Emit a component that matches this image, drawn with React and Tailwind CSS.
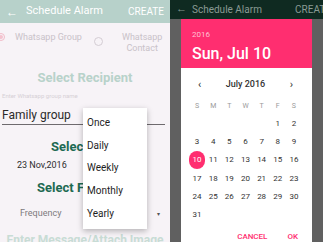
import React from "react";

const weeks = [
  ["", "", "", "", "", "1", "2"],
  ["3", "4", "5", "6", "7", "8", "9"],
  ["10", "11", "12", "13", "14", "15", "16"],
  ["17", "18", "19", "20", "21", "22", "23"],
  ["24", "25", "26", "27", "28", "29", "30"],
  ["31", "", "", "", "", "", ""],
];

const LeftScreen = () => {
  return (
    <div className="relative w-[170px] h-[242px] bg-[#f7f3f7] overflow-hidden">
      <div className="h-[23px] bg-[#b7d1ca] flex items-center px-[6px] text-white text-[11px]">
        <span className="w-[16px] text-[12px]">←</span>
        <span className="flex-1 ml-[4px]">Schedule Alarm</span>
        <span className="text-[10px]">CREATE</span>
      </div>

      <div className="flex items-start pt-[9px] text-[#c9c2c9] text-[9px] leading-[11px]">
        <div className="w-[8px] h-[8px] rounded-full border border-[#f2bcc9] flex items-center justify-center -ml-[3px] mt-[1px]">
          <div className="w-[4px] h-[4px] rounded-full bg-[#f4c3cf]" />
        </div>
        <span className="ml-[10px]">Whatsapp Group</span>
        <div className="w-[9px] h-[9px] rounded-full border border-[#d4cdd4] ml-[12px] mt-[5px]" />
        <span className="ml-[19px] text-center">
          Whatsapp
          <br />
          Contact
        </span>
      </div>

      <div className="text-center text-[#b8d2ca] font-bold text-[13px] mt-[14px]">
        Select Recipient
      </div>

      <div className="px-[2px] mt-[3px] text-[#d6d0d6] text-[6px]">Enter Whatsapp group name</div>
      <div className="mx-[2px] mr-[5px] border-b border-[#6e6a6e] text-[#2a2a2a] text-[12px] leading-[16px] pt-[7px] pb-[1px]">
        Family group
      </div>

      <div className="pl-[51px] mt-[12px] text-[#1d6a52] font-bold text-[13px]">Select</div>
      <div className="pl-[17px] mt-[3px] text-[#2d2d2d] text-[9px]">23 Nov,2016</div>
      <div className="pl-[37px] mt-[5px] text-[#1d6a52] font-bold text-[13px]">Select Fr</div>

      <div className="flex items-center pl-[20px] pr-[10px] mt-[10px] text-[#7d7a7d] text-[9px]">
        <span className="flex-1">Frequency</span>
        <span className="text-[6px] text-[#555]">▾</span>
      </div>

      <div className="text-center text-[#c8dcd5] font-bold text-[12px] mt-[10px] whitespace-nowrap">
        Enter Message/Attach Image
      </div>

      <div className="absolute left-[83px] top-[108px] w-[64px] bg-white shadow-[0_2px_6px_rgba(0,0,0,0.28)] pt-[3px] pb-[4px] text-[#1e1e1e] text-[10px]">
        {["Once", "Daily", "Weekly", "Monthly", "Yearly"].map((item) => (
          <div key={item} className="h-[22.8px] flex items-center pl-[4px]">
            {item}
          </div>
        ))}
      </div>
    </div>
  );
};

const RightScreen = () => {
  return (
    <div className="w-[153px] h-[242px] bg-[#606060] overflow-hidden flex flex-col">
      <div className="h-[19px] bg-[#0f2a21] flex items-center px-[6px] text-[#8a9a94] text-[10px] shrink-0">
        <span className="w-[14px] text-[11px]">←</span>
        <span className="flex-1 ml-[2px]">Schedule Alarm</span>
        <span className="-mr-[14px]">CREATE</span>
      </div>

      <div className="pl-[11px] pr-[11px]">
        <div className="bg-[#ff2e70] h-[49px] px-[11px] pt-[11px]">
          <div className="text-[#ffc0d3] text-[8px] leading-[10px]">2016</div>
          <div className="text-white text-[16px] font-medium leading-[20px] mt-[4px]">Sun, Jul 10</div>
        </div>

        <div className="bg-white h-[200px] pl-[8px] pr-[10px] pt-[10px]">
          <div className="flex items-center justify-between px-[9px] text-[#333] text-[9px] h-[14px]">
            <span className="text-[11px]">‹</span>
            <span className="font-medium text-[9px]">July 2016</span>
            <span className="text-[11px]">›</span>
          </div>
          <div className="grid grid-cols-7 mt-[7px] text-[#9a9a9a] text-[7px] text-center h-[14px] items-center">
            {["S", "M", "T", "W", "T", "F", "S"].map((d, i) => (
              <span key={i}>{d}</span>
            ))}
          </div>
          <div className="mt-[2px]">
            {weeks.map((row, r) => (
              <div key={r} className="grid grid-cols-7 h-[18.2px] items-center text-center text-[#333] text-[8px]">
                {row.map((d, c) =>
                  d === "10" ? (
                    <span key={c} className="flex justify-center">
                      <span className="w-[18px] h-[18px] rounded-full bg-[#ff2e70] text-white flex items-center justify-center">
                        10
                      </span>
                    </span>
                  ) : (
                    <span key={c}>{d}</span>
                  )
                )}
              </div>
            ))}
          </div>
          <div className="flex justify-end gap-[20px] pr-[4px] mt-[7px] text-[#ff2e70] text-[8px] font-medium">
            <span>CANCEL</span>
            <span>OK</span>
          </div>
        </div>
      </div>
    </div>
  );
};

export default function App() {
  return (
    <div className="flex w-[323px] h-[242px] overflow-hidden" style={{ fontFamily: "Roboto, 'Liberation Sans', sans-serif" }}>
      <LeftScreen />
      <RightScreen />
    </div>
  );
}
